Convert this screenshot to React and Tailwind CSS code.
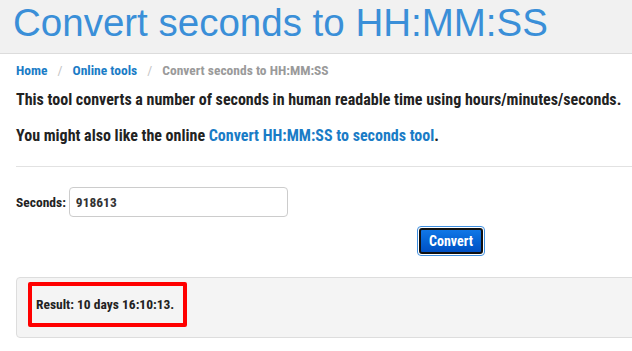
import React, { useState } from "react";

const narrow = "font-['Roboto_Condensed','Roboto',sans-serif] font-stretch-condensed font-bold whitespace-nowrap";

const App = () => {
  const [seconds, setSeconds] = useState("918613");
  const [result, setResult] = useState("10 days 16:10:13");

  // Convert seconds to "N days HH:MM:SS"
  const handleSubmit = (e) => {
    e.preventDefault();
    const n = Math.max(0, Math.floor(Number(seconds) || 0));
    const pad = (v) => String(v).padStart(2, "0");
    const days = Math.floor(n / 86400);
    const h = Math.floor((n % 86400) / 3600);
    const m = Math.floor((n % 3600) / 60);
    setResult(`${days} days ${pad(h)}:${pad(m)}:${pad(n % 60)}`);
  };

  return (
    <div className="w-full overflow-hidden bg-white">
      <div className="w-[680px]">
        {/* Header */}
        <header className="h-[54px] bg-[#f1f1f1] border-b border-[#dcdcdc] pl-[13px]">
          <h1 className="font-['Liberation_Sans',Arial,sans-serif] text-[38.5px] leading-[44px] pt-[1px] text-[#3a8fd8]">
            Convert seconds to HH:MM:SS
          </h1>
        </header>

        <main className={`pl-4 text-[#222] ${narrow}`}>
          {/* Breadcrumb */}
          <nav className="pt-[1px] h-[30px] text-[13.5px] leading-[30px] flex gap-[10px]">
            <a href="#" className="text-[#1a7cc6]">Home</a>
            <span className="text-[#c4c4c4] font-normal">/</span>
            <a href="#" className="text-[#1a7cc6]">Online tools</a>
            <span className="text-[#c4c4c4] font-normal">/</span>
            <span className="text-[#9a9a9a]">Convert seconds to HH:MM:SS</span>
          </nav>

          <p className="text-[16px] leading-[20px] mt-[6px]">
            This tool converts a number of seconds in human readable time using hours/minutes/seconds.
          </p>
          <p className="text-[16px] leading-[20px] mt-[16px]">
            You might also like the online{" "}
            <a href="#" className="text-[#1a7cc6]">Convert HH:MM:SS to seconds tool</a>.
          </p>

          <hr className="mt-[20px] border-t border-[#e2e2e2]" />

          {/* Form */}
          <form onSubmit={handleSubmit}>
            <div className="mt-[20px] flex items-center">
              <label className="text-[13.5px] mr-[3px]">Seconds:</label>
              <input
                type="text"
                value={seconds}
                onChange={(e) => setSeconds(e.target.value)}
                className={`w-[219px] h-[30px] border border-[#cccccc] rounded-[4px] px-[6px] text-[13.5px] text-[#333] ${narrow}`}
              />
            </div>
            <div className="mt-[9px] pl-[401px]">
              <button
                type="submit"
                className="rounded-[4px] border border-[#3f8fe0] p-[1px] bg-white"
              >
                <span className={`block w-[64px] h-[26px] rounded-[3px] border-2 border-[#111] bg-gradient-to-b from-[#1177e6] to-[#0050c4] text-white text-[14px] leading-[22px] ${narrow}`}>
                  Convert
                </span>
              </button>
            </div>
          </form>

          {/* Result */}
          <div className="mt-[21px] h-[61px] bg-[#f4f4f4] border border-[#dddddd] rounded-[4px] pt-[4px] pl-[11px]">
            <div className="w-[159px] h-[45px] border-4 border-[#ff0000] rounded-[2px] pl-[4px] flex items-center text-[13.5px] text-[#222]">
              Result: {result}.
            </div>
          </div>
        </main>
      </div>
    </div>
  );
};

export default App;
